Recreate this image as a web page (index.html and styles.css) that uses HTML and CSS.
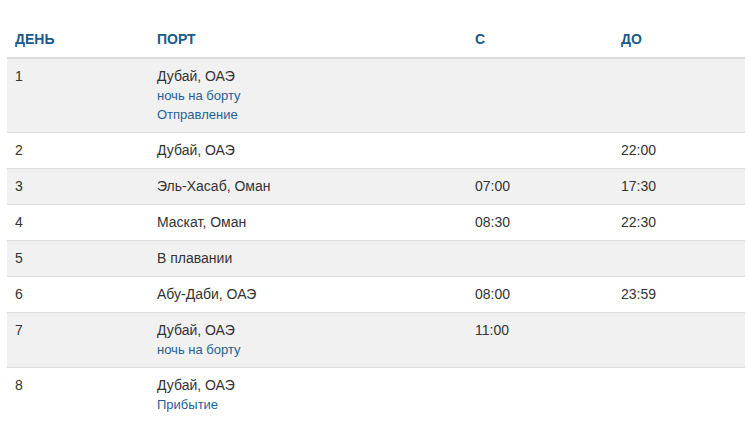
FILE: index.html
```html
<!DOCTYPE html>
<html lang="ru">
<head>
<meta charset="utf-8">
<link rel="stylesheet" href="styles.css">
</head>
<body>
<table class="itinerary">
  <colgroup>
    <col class="c-day"><col class="c-port"><col class="c-from"><col class="c-to">
  </colgroup>
  <thead>
    <tr><th>День</th><th>Порт</th><th>С</th><th>До</th></tr>
  </thead>
  <tbody>
    <tr><td>1</td><td>Дубай, ОАЭ<span class="note">ночь на борту</span><span class="note">Отправление</span></td><td></td><td></td></tr>
    <tr><td>2</td><td>Дубай, ОАЭ</td><td></td><td>22:00</td></tr>
    <tr><td>3</td><td>Эль-Хасаб, Оман</td><td>07:00</td><td>17:30</td></tr>
    <tr><td>4</td><td>Маскат, Оман</td><td>08:30</td><td>22:30</td></tr>
    <tr><td>5</td><td>В плавании</td><td></td><td></td></tr>
    <tr><td>6</td><td>Абу-Даби, ОАЭ</td><td>08:00</td><td>23:59</td></tr>
    <tr><td>7</td><td>Дубай, ОАЭ<span class="note">ночь на борту</span></td><td>11:00</td><td></td></tr>
    <tr><td>8</td><td>Дубай, ОАЭ<span class="note">Прибытие</span></td><td></td><td></td></tr>
  </tbody>
</table>
</body>
</html>
```

FILE: styles.css
```css
html, body {
  margin: 0;
  padding: 0;
  background: #fff;
}
body {
  font-family: "Liberation Sans", Arial, sans-serif;
  font-size: 14px;
  line-height: 19px;
  color: #333;
}
.itinerary {
  margin: 22px 0 0 7px;
  width: 738px;
  border-collapse: collapse;
  table-layout: fixed;
}
.c-day { width: 142px; }
.c-port { width: 318px; }
.c-from { width: 146px; }
.c-to { width: 132px; }
.itinerary th {
  text-align: left;
  padding: 8px;
  font-size: 14px;
  font-weight: bold;
  text-transform: uppercase;
  color: #1a5a8b;
  border-bottom: 2px solid #ddd;
  vertical-align: bottom;
}
.itinerary td {
  padding: 8px;
  vertical-align: top;
  border-top: 1px solid #ddd;
}
.itinerary thead + tbody tr:first-child td {
  border-top: 0;
}
.itinerary tbody tr:nth-child(odd) {
  background: #f1f1f1;
}
.note {
  display: block;
  font-size: 13px;
  line-height: 19px;
  color: #1f6197;
}
```
